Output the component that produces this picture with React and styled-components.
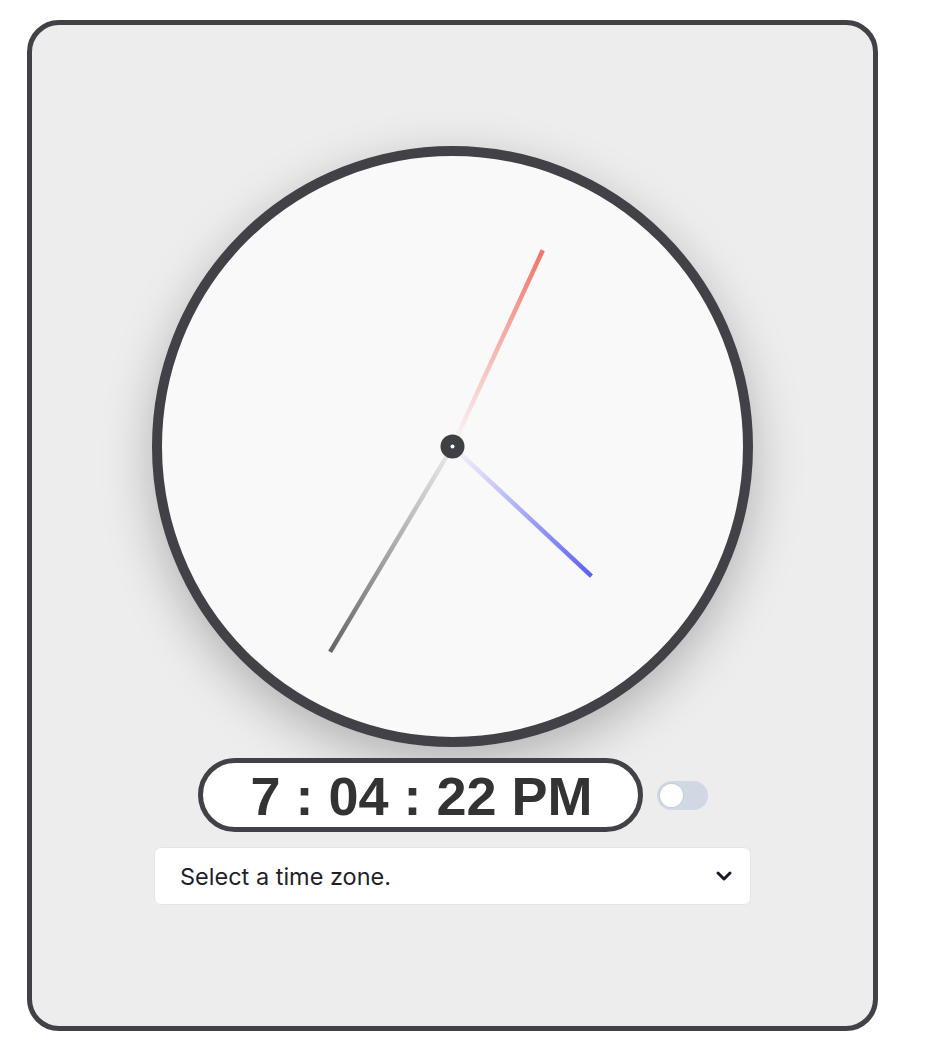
import styled, { createGlobalStyle } from "styled-components";
import { ChevronDown } from "lucide-react";

const GlobalStyle = createGlobalStyle`
  html, body {
    margin: 0;
    padding: 0;
    background: #ffffff;
    font-family: Inter, "Liberation Sans", sans-serif;
  }
`;

const Page = styled.div`
  padding: 20px 0 0 27px;
`;

const Card = styled.main`
  /* Box */
  box-sizing: border-box;
  width: 851px;
  height: 1011px;
  display: flex;
  flex-direction: column;
  align-items: center;
  padding-top: 121px;
  background-color: #ededed;
  border: 5px solid #414147;
  border-radius: 32px;
`;

const Face = styled.div`
  box-sizing: border-box;
  width: 601px;
  height: 601px;
  border-radius: 50%;
  border: 10px solid #414147;
  background-color: #f9f9f9;
  box-shadow: 0 16px 50px rgba(0, 0, 0, 0.25);
`;

const DisplayRow = styled.div`
  display: flex;
  align-items: center;
  gap: 14px;
  margin-top: 11px;
`;

const TimePill = styled.div`
  box-sizing: border-box;
  width: 445px;
  height: 74px;
  display: flex;
  align-items: center;
  justify-content: center;
  background-color: #ffffff;
  border: 5px solid #414147;
  border-radius: 37px;
  font-family: "Liberation Sans", Arial, sans-serif;
  font-weight: 700;
  font-size: 54px;
  color: #333333;
  padding: 2px 0 0 3px;
`;

const Track = styled.div`
  box-sizing: border-box;
  width: 51px;
  height: 29px;
  display: flex;
  align-items: center;
  padding-left: 3px;
  border-radius: 15px;
  background-color: ${(p) => (p.$on ? "#6366f1" : "#cfd8e3")};
`;

const Knob = styled.span`
  width: 23px;
  height: 23px;
  border-radius: 50%;
  background-color: #ffffff;
  box-shadow: 0 0 0 1px rgba(0, 0, 0, 0.05);
`;

const SelectBox = styled.div`
  position: relative;
  box-sizing: border-box;
  width: 597px;
  height: 58px;
  margin-top: 15px;
  background-color: #ffffff;
  border: 1px solid #e2e5ea;
  border-radius: 7px;
`;

const Select = styled.select`
  appearance: none;
  width: 100%;
  height: 100%;
  border: none;
  background: transparent;
  padding: 0 0 0 25px;
  font-family: Inter, "Liberation Sans", sans-serif;
  font-size: 23.5px;
  color: #1f1f2b;
  outline: none;
`;

const Chevron = styled(ChevronDown)`
  position: absolute;
  right: 14px;
  top: 16px;
  pointer-events: none;
  color: #1a1a28;
`;

const hands = [
  { id: "hour", angle: 210.8, length: 239, color: "#666666", from: "#ececec" },
  { id: "min", angle: 24.7, length: 216, color: "#f07469", from: "#f9f9f9" },
  { id: "sec", angle: 133, length: 190, color: "#5b5ef5", from: "#f9f9f9" },
];

function ClockHands() {
  const c = 290.5;
  return (
    <svg width="581" height="581" viewBox="0 0 581 581">
      <defs>
        {hands.map((h) => {
          const r = (h.angle * Math.PI) / 180;
          const x = c + Math.sin(r) * h.length;
          const y = c - Math.cos(r) * h.length;
          return (
            <linearGradient
              key={h.id}
              id={`g-${h.id}`}
              gradientUnits="userSpaceOnUse"
              x1={c}
              y1={c}
              x2={x}
              y2={y}
            >
              <stop offset="0" stopColor={h.from} />
              <stop offset="1" stopColor={h.color} />
            </linearGradient>
          );
        })}
      </defs>
      {hands.map((h) => {
        const r = (h.angle * Math.PI) / 180;
        return (
          <line
            key={h.id}
            x1={c}
            y1={c}
            x2={c + Math.sin(r) * h.length}
            y2={c - Math.cos(r) * h.length}
            stroke={`url(#g-${h.id})`}
            strokeWidth="4.5"
          />
        );
      })}
      <circle cx={c} cy={c} r="12" fill="#3f3f46" />
      <circle cx={c} cy={c} r="2" fill="#ffffff" />
    </svg>
  );
}

export default function App() {
  return (
    <Page>
      <GlobalStyle />
      <Card>
        <Face>
          <ClockHands />
        </Face>
        <DisplayRow>
          <TimePill>7 : 04 : 22 PM</TimePill>
          <Track>
            <Knob />
          </Track>
        </DisplayRow>
        <SelectBox>
          <Select defaultValue="">
            <option value="">Select a time zone.</option>
          </Select>
          <Chevron size={24} strokeWidth={3} />
        </SelectBox>
      </Card>
    </Page>
  );
}
